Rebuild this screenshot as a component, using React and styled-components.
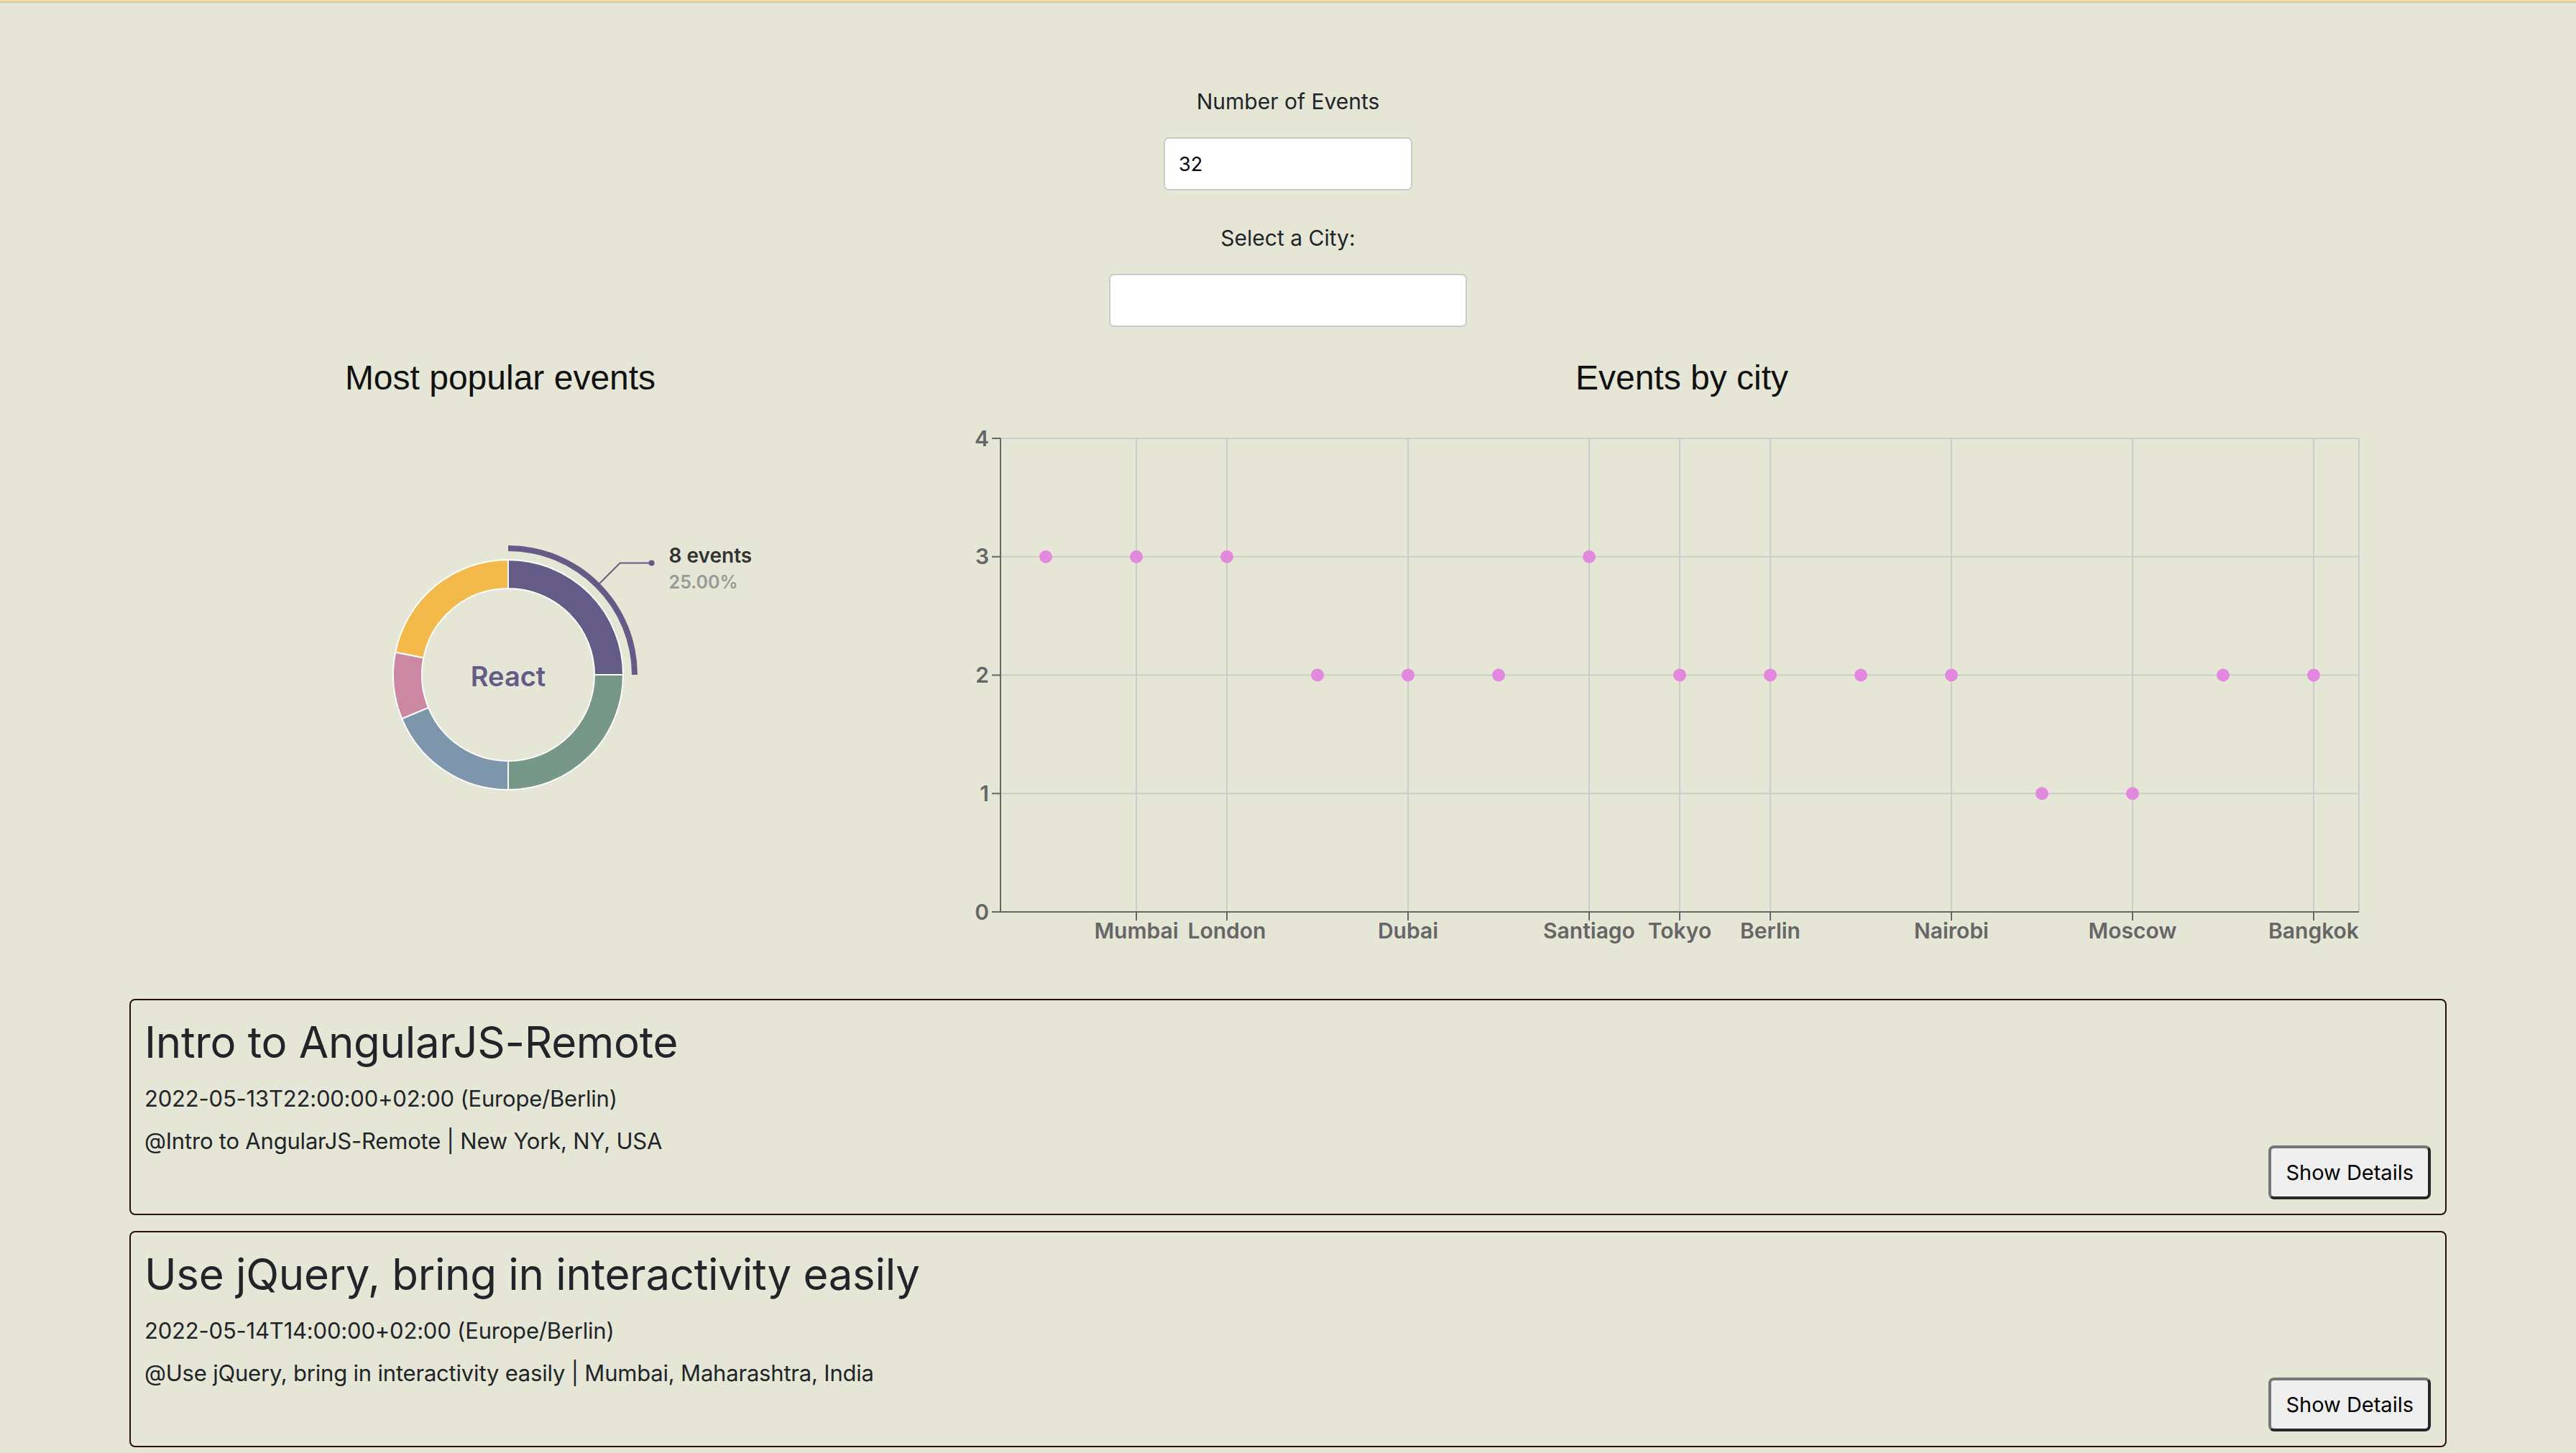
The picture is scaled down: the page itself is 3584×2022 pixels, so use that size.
import React from 'react';
import styled, { createGlobalStyle } from 'styled-components';

const GlobalStyle = createGlobalStyle`
  body {
    margin: 0;
    padding: 0;
    background: #e5e6d5;
    font-family: Inter, "Noto Sans", sans-serif;
    color: #212529;
  }
  * {
    box-sizing: border-box;
  }
`;

const PIE_DATA = [
  { name: 'React', value: 8, color: '#645b87' },
  { name: 'JavaScript', value: 7, color: '#f4b94b' },
  { name: 'Node', value: 3, color: '#cc88a3' },
  { name: 'jQuery', value: 6, color: '#7d96ab' },
  { name: 'AngularJS', value: 8, color: '#779889' },
];

const CITY_DATA = [
  { city: 'New York', count: 3, label: false },
  { city: 'Mumbai', count: 3, label: true },
  { city: 'London', count: 3, label: true },
  { city: 'Toronto', count: 2, label: false },
  { city: 'Dubai', count: 2, label: true },
  { city: 'Sydney', count: 2, label: false },
  { city: 'Santiago', count: 3, label: true },
  { city: 'Tokyo', count: 2, label: true },
  { city: 'Berlin', count: 2, label: true },
  { city: 'Paris', count: 2, label: false },
  { city: 'Nairobi', count: 2, label: true },
  { city: 'Cairo', count: 1, label: false },
  { city: 'Moscow', count: 1, label: true },
  { city: 'Singapore', count: 2, label: false },
  { city: 'Bangkok', count: 2, label: true },
];

const EVENTS = [
  {
    id: 1,
    summary: 'Intro to AngularJS-Remote',
    start: '2022-05-13T22:00:00+02:00',
    timeZone: 'Europe/Berlin',
    location: 'New York, NY, USA',
  },
  {
    id: 2,
    summary: 'Use jQuery, bring in interactivity easily',
    start: '2022-05-14T14:00:00+02:00',
    timeZone: 'Europe/Berlin',
    location: 'Mumbai, Maharashtra, India',
  },
];

/* donut geometry */
const CX = 527;
const CY = 385;
const INNER = 120;
const OUTER = 160;

const polar = (r, deg) => {
  const a = (deg * Math.PI) / 180;
  return [CX + r * Math.cos(a), CY - r * Math.sin(a)];
};

const sectorPath = (ri, ro, start, end) => {
  const large = end - start > 180 ? 1 : 0;
  const [x1, y1] = polar(ro, start);
  const [x2, y2] = polar(ro, end);
  const [x3, y3] = polar(ri, end);
  const [x4, y4] = polar(ri, start);
  return `M${x1},${y1} A${ro},${ro} 0 ${large} 0 ${x2},${y2} L${x3},${y3} A${ri},${ri} 0 ${large} 1 ${x4},${y4} Z`;
};

const PopularEventsChart = () => {
  const total = PIE_DATA.reduce((s, d) => s + d.value, 0);
  let angle = 0;
  const sectors = PIE_DATA.map((d) => {
    const start = angle;
    angle += (d.value / total) * 360;
    return { ...d, start, end: angle };
  });
  const active = sectors[0];
  const mid = (active.start + active.end) / 2;
  const [sx, sy] = polar(OUTER + 20, mid);
  const [mx, my] = polar(OUTER + 60, mid);
  const ex = mx + 44;

  return (
    <ChartSvg width="1032" height="800">
      {sectors.map((s) => (
        <path key={s.name} d={sectorPath(INNER, OUTER, s.start, s.end)} fill={s.color} stroke="#fff" strokeWidth="2" />
      ))}
      <path d={sectorPath(OUTER + 12, OUTER + 20, active.start, active.end)} fill={active.color} />
      <polyline points={`${sx},${sy} ${mx},${my} ${ex},${my}`} fill="none" stroke={active.color} strokeWidth="2" />
      <circle cx={ex} cy={my} r="4" fill={active.color} />
      <CenterLabel x={CX} y={CY + 16} textAnchor="middle" fill={active.color}>
        {active.name}
      </CenterLabel>
      <ValueLabel x={ex + 24} y={my}>{`${active.value} events`}</ValueLabel>
      <PercentLabel x={ex + 24} y={my + 36}>{`${((active.value / total) * 100).toFixed(2)}%`}</PercentLabel>
    </ChartSvg>
  );
};

/* scatter geometry */
const PLOT_LEFT = 120;
const PLOT_RIGHT = 2010;
const PLOT_TOP = 56;
const PLOT_BOTTOM = 715;
const Y_MAX = 4;

const CityChart = () => {
  const band = (PLOT_RIGHT - PLOT_LEFT) / CITY_DATA.length;
  const xOf = (i) => PLOT_LEFT + band * (i + 0.5);
  const yOf = (v) => PLOT_BOTTOM - (v / Y_MAX) * (PLOT_BOTTOM - PLOT_TOP);
  const yTicks = [0, 1, 2, 3, 4];

  return (
    <ChartSvg width="2136" height="800">
      {/* grid */}
      {yTicks.slice(1).map((t) => (
        <line key={`h${t}`} x1={PLOT_LEFT} x2={PLOT_RIGHT} y1={yOf(t)} y2={yOf(t)} stroke="#ccc" strokeWidth="2" />
      ))}
      {CITY_DATA.map((d, i) =>
        d.label ? (
          <line key={`v${d.city}`} x1={xOf(i)} x2={xOf(i)} y1={PLOT_TOP} y2={PLOT_BOTTOM} stroke="#ccc" strokeWidth="2" />
        ) : null
      )}
      <line x1={PLOT_RIGHT} x2={PLOT_RIGHT} y1={PLOT_TOP} y2={PLOT_BOTTOM} stroke="#ccc" strokeWidth="2" />

      {/* axes */}
      <line x1={PLOT_LEFT} x2={PLOT_LEFT} y1={PLOT_TOP} y2={PLOT_BOTTOM} stroke="#666" strokeWidth="2" />
      <line x1={PLOT_LEFT} x2={PLOT_RIGHT} y1={PLOT_BOTTOM} y2={PLOT_BOTTOM} stroke="#666" strokeWidth="2" />
      {yTicks.map((t) => (
        <g key={`yt${t}`}>
          <line x1={PLOT_LEFT - 12} x2={PLOT_LEFT} y1={yOf(t)} y2={yOf(t)} stroke="#666" strokeWidth="2" />
          <AxisLabel x={PLOT_LEFT - 16} y={yOf(t)} dy="0.355em" textAnchor="end">
            {t}
          </AxisLabel>
        </g>
      ))}
      {CITY_DATA.map((d, i) =>
        d.label ? (
          <g key={`xt${d.city}`}>
            <line x1={xOf(i)} x2={xOf(i)} y1={PLOT_BOTTOM} y2={PLOT_BOTTOM + 12} stroke="#666" strokeWidth="2" />
            <AxisLabel x={xOf(i)} y={PLOT_BOTTOM + 16} dy="0.71em" textAnchor="middle">
              {d.city}
            </AxisLabel>
          </g>
        ) : null
      )}

      {/* points */}
      {CITY_DATA.map((d, i) => (
        <circle key={`p${d.city}`} cx={xOf(i)} cy={yOf(d.count)} r="9" fill="#e388df" />
      ))}
    </ChartSvg>
  );
};

const EventItem = ({ event }) => (
  <EventCard>
    <EventDetails>
      <EventTitle>{event.summary}</EventTitle>
      <EventMeta>{`${event.start} (${event.timeZone})`}</EventMeta>
      <EventMeta $gap="23px">{`@${event.summary} | ${event.location}`}</EventMeta>
    </EventDetails>
    <DetailsButton type="button">Show Details</DetailsButton>
  </EventCard>
);

const App = () => (
  <>
    <GlobalStyle />
    <TopBar />
    <Controls>
      <Field>
        <FieldLabel htmlFor="number-of-events">Number of Events</FieldLabel>
        <TextInput id="number-of-events" type="text" defaultValue="32" $width="346px" />
      </Field>
      <Field>
        <FieldLabel htmlFor="city-search">Select a City:</FieldLabel>
        <TextInput id="city-search" type="text" $width="498px" />
      </Field>
    </Controls>
    <ChartsRow>
      <ChartPanel>
        <ChartTitle>Most popular events</ChartTitle>
        <PopularEventsChart />
      </ChartPanel>
      <ChartPanel>
        <ChartTitle>Events by city</ChartTitle>
        <CityChart />
      </ChartPanel>
    </ChartsRow>
    <EventList>
      {EVENTS.map((e) => (
        <EventItem key={e.id} event={e} />
      ))}
    </EventList>
  </>
);

export default App;

/* Styled Components */

const TopBar = styled.div`
  height: 4px;
  background: #d6c9a6;
  border-top: 2px solid #fcd8a1;
`;

const Controls = styled.section`
  display: flex;
  flex-direction: column;
  align-items: center;
  gap: 48px;
  padding-top: 119px;
`;

const Field = styled.div`
  display: flex;
  flex-direction: column;
  align-items: center;
  gap: 32px;
`;

const FieldLabel = styled.label`
  font-size: 30px;
  line-height: 36px;
  color: #212529;
`;

const TextInput = styled.input`
  width: ${(p) => p.$width};
  height: 74px;
  padding: 0 19px;
  background: #fff;
  border: 2px solid #cbcbcb;
  border-radius: 7px;
  font-family: Inter, sans-serif;
  font-size: 27px;
  color: #000;
  outline: none;
`;

const ChartsRow = styled.section`
  display: grid;
  grid-template-columns: 1032px 2136px;
  column-gap: 60px;
  padding: 0 176px 0 180px;
  margin-top: 43px;
`;

const ChartPanel = styled.div`
  display: flex;
  flex-direction: column;
  align-items: center;
`;

const ChartTitle = styled.h2`
  margin: 0;
  font-family: "Liberation Sans", Arial, sans-serif;
  font-size: 48px;
  font-weight: 400;
  line-height: 56px;
  color: #111;
`;

const ChartSvg = styled.svg`
  display: block;
  overflow: visible;
`;

const CenterLabel = styled.text`
  font-family: Inter, sans-serif;
  font-size: 38px;
  font-weight: 600;
`;

const ValueLabel = styled.text`
  font-family: Inter, sans-serif;
  font-size: 28px;
  font-weight: 600;
  fill: #333;
`;

const PercentLabel = styled.text`
  font-family: Inter, sans-serif;
  font-size: 25px;
  font-weight: 600;
  fill: #999;
`;

const AxisLabel = styled.text`
  font-family: Inter, sans-serif;
  font-size: 30px;
  font-weight: 600;
  fill: #666;
`;

const EventList = styled.section`
  display: flex;
  flex-direction: column;
  gap: 22px;
  width: 3224px;
  margin: 36px auto 0;
`;

const EventCard = styled.article`
  display: grid;
  grid-template-columns: 1fr auto;
  min-height: 301px;
  padding: 22px 20px 20px 19px;
  border: 2px solid #2b1105;
  border-radius: 8px;
`;

const EventDetails = styled.div`
  display: flex;
  flex-direction: column;
`;

const EventTitle = styled.h2`
  margin: 0;
  font-size: 60px;
  font-weight: 400;
  line-height: 72px;
  letter-spacing: -0.3px;
  color: #212529;
`;

const EventMeta = styled.p`
  margin: ${(p) => p.$gap || '25px'} 0 0;
  font-size: 31px;
  line-height: 36px;
  letter-spacing: -0.2px;
  color: #212529;
`;

const DetailsButton = styled.button`
  align-self: end;
  height: 75px;
  padding: 0 20px;
  background: #efefef;
  border: 4px solid;
  border-color: #767676 #262626 #262626 #767676;
  border-radius: 8px;
  font-family: Inter, sans-serif;
  font-size: 29px;
  color: #000;
  cursor: pointer;
`;
